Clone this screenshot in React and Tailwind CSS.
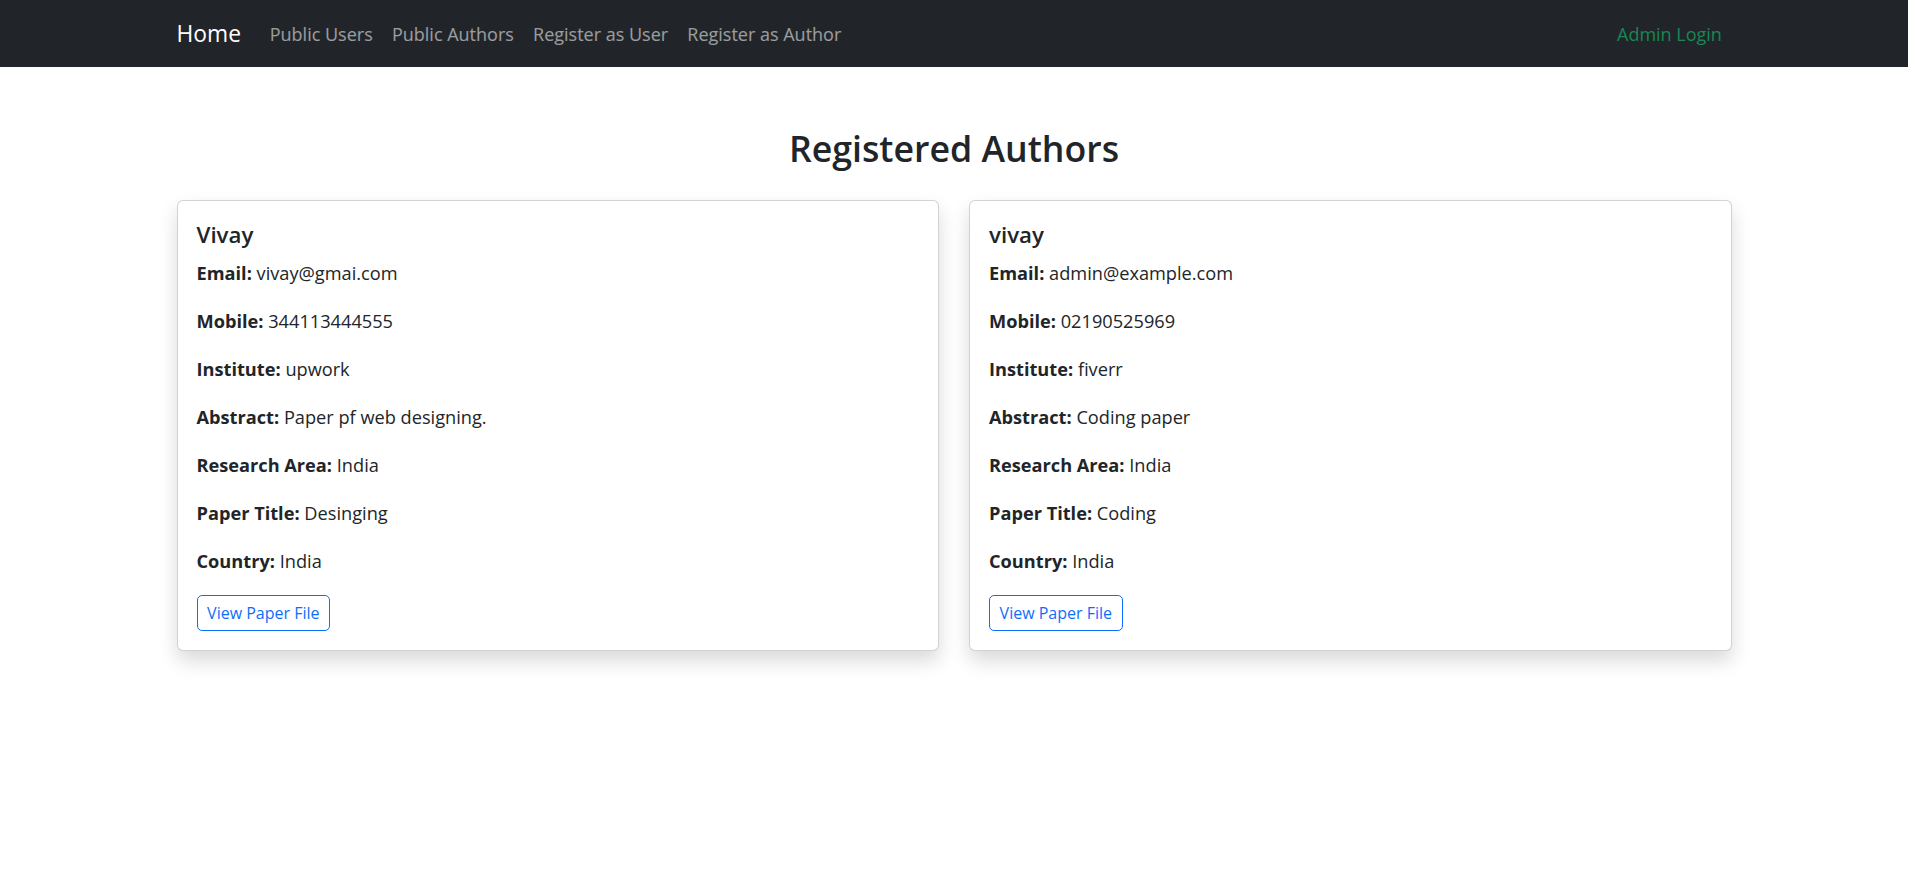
import React from 'react';

const authors = [
  {
    name: 'Vivay',
    email: 'vivay@gmai.com',
    mobile: '344113444555',
    institute: 'upwork',
    abstract: 'Paper pf web designing.',
    area: 'India',
    title: 'Desinging',
    country: 'India',
  },
  {
    name: 'vivay',
    email: 'admin@example.com',
    mobile: '02190525969',
    institute: 'fiverr',
    abstract: 'Coding paper',
    area: 'India',
    title: 'Coding',
    country: 'India',
  },
];

const Field = ({ label, value }) => (
  <p className="text-[18.2px] leading-[29px] mb-[19px]">
    <strong className="font-bold">{label}:</strong> {value}
  </p>
);

const AuthorCard = ({ author }) => (
  <div className="bg-white border border-black/[0.175] rounded-[6px] shadow-[0_10px_19px_rgba(0,0,0,0.15)] p-[19px]">
    <h5 className="text-[22.3px] leading-[29px] mb-[10px] font-semibold">{author.name}</h5>
    <Field label="Email" value={author.email} />
    <Field label="Mobile" value={author.mobile} />
    <Field label="Institute" value={author.institute} />
    <Field label="Abstract" value={author.abstract} />
    <Field label="Research Area" value={author.area} />
    <Field label="Paper Title" value={author.title} />
    <Field label="Country" value={author.country} />
    <button className="border border-[#0d6efd] text-[#0d6efd] rounded-[5px] px-[9.6px] h-[36px] text-[16px] leading-[25px]">
      View Paper File
    </button>
  </div>
);

export default function App() {
  return (
    <div className="min-h-screen bg-white text-[#212529] font-['Open_Sans',sans-serif]">
      {/* Navbar */}
      <nav className="bg-[#212529] h-[67px]">
        <div className="w-[1555px] mx-auto h-full flex items-center pt-[2px]">
          <a className="text-white text-[22.8px] mr-[19.2px]">Home</a>
          <div className="flex text-[18px] text-white/55">
            <a className="px-[9.6px]">Public Users</a>
            <a className="px-[9.6px]">Public Authors</a>
            <a className="px-[9.6px]">Register as User</a>
            <a className="px-[9.6px]">Register as Author</a>
          </div>
          <a className="ml-auto px-[9.6px] text-[18px] text-[#198754]">Admin Login</a>
        </div>
      </nav>

      {/* Content */}
      <main className="w-[1555px] mx-auto pt-[58px]">
        <h2 className="text-center text-[35.7px] leading-[46px] font-semibold mb-[29px]">Registered Authors</h2>
        <div className="grid grid-cols-2 gap-[30px]">
          {authors.map((a, i) => (
            <AuthorCard key={i} author={a} />
          ))}
        </div>
      </main>
    </div>
  );
}
